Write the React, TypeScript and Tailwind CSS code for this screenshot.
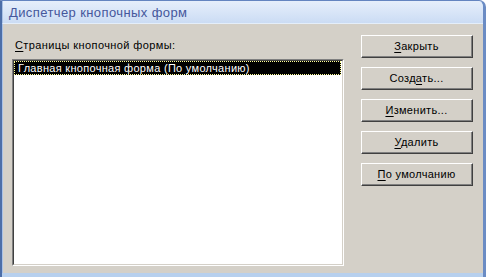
import React from "react";

const font = { fontFamily: '"Liberation Sans", Arial, sans-serif' };

function Btn({ pre, u, post }: { pre: string; u: string; post: string }) {
  return (
    <div className="h-[23px] w-[112px] border-t border-l border-t-white border-l-white border-b border-r border-b-[#404040] border-r-[#404040]">
      <div className="h-full w-full border-b border-r border-b-[#808080] border-r-[#808080] flex items-center justify-center text-[11px] tracking-[0.3px] text-black leading-none">
        <span>
          {pre}
          <span className="underline underline-offset-[2px]">{u}</span>
          {post}
        </span>
      </div>
    </div>
  );
}

export default function App() {
  return (
    <div className="w-[488px] h-[277px] bg-white overflow-hidden" style={font}>
      <div className="w-[486px] h-[277px] flex flex-col rounded-tr-[7px] overflow-hidden border-t border-t-[#6485c0] border-l-2 border-l-[#4c6ea8] border-r-[3px] border-r-[#6b8cc4] bg-[#b7d0ee]">
        {/* title bar */}
        <div className="h-[23px] shrink-0 flex items-center pl-[6px] bg-gradient-to-b from-[#e6effb] to-[#cbdcf4] border-l border-l-[#a9c1e6] border-b border-b-[#e4eefa]">
          <span className="text-[13px] text-[#45579c] tracking-[0.4px] leading-none mt-[1px]">
            Диспетчер кнопочных форм
          </span>
        </div>
        {/* client */}
        <div className="h-[249px] shrink-0 bg-[#d4d0c8] border-l border-l-[#a9c1e6] flex items-start pl-[9px] pt-[11px]">
          <div className="flex flex-col w-[332px]">
            <div className="h-[14px] mt-[3px] mb-[7px] ml-[3px] text-[11px] tracking-[0.4px] leading-[14px] text-black">
              <span className="underline underline-offset-[2px]">С</span>траницы кнопочной формы:
            </div>
            <div className="h-[207px] border-t border-l border-t-[#808080] border-l-[#808080] border-b border-r border-b-white border-r-white">
              <div className="h-full border-t border-l border-t-[#404040] border-l-[#404040] border-b border-r border-b-[#d4d0c8] border-r-[#d4d0c8] bg-white">
                <div className="h-[14px] mr-[1px] bg-black text-white text-[11px] tracking-[0.3px] leading-[14px] pl-[4px] outline outline-1 outline-dotted outline-[#ffff99] -outline-offset-1">
                  Главная кнопочная форма (По умолчанию)
                </div>
              </div>
            </div>
          </div>
          <div className="ml-[17px] flex flex-col gap-[9px]">
            <Btn pre="" u="З" post="акрыть" />
            <Btn pre="Созд" u="а" post="ть..." />
            <Btn pre="" u="И" post="зменить..." />
            <Btn pre="" u="У" post="далить" />
            <Btn pre="" u="П" post="о умолчанию" />
          </div>
        </div>
      </div>
    </div>
  );
}
